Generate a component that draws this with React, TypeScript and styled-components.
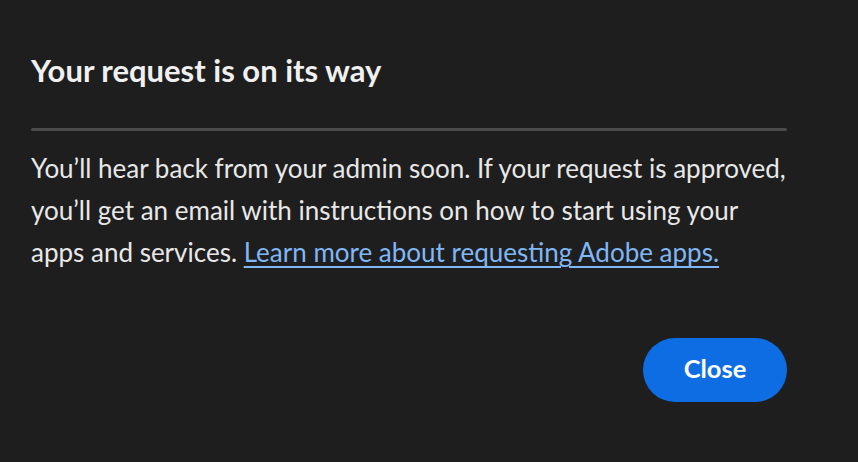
import * as React from 'react';
import styled, { createGlobalStyle } from 'styled-components';

const GlobalStyle = createGlobalStyle`
    html, body {
        margin: 0;
        padding: 0;
        background: #1e1e1e;
    }
    body {
        font-family: Lato, "Open Sans", sans-serif;
        -webkit-font-smoothing: antialiased;
    }
`;

const Dialog = styled.section`
    width: 858px;
    height: 462px;
    box-sizing: border-box;
    padding: 52px 71px 0 31px;
    background: #1e1e1e;
    display: flex;
    flex-direction: column;
`;

const Heading = styled.h2`
    margin: 0;
    font-size: 31px;
    line-height: 36px;
    font-weight: 700;
    color: #f0f0f0;
`;

const Divider = styled.hr`
    margin: 40px 0 0;
    border: none;
    height: 3px;
    border-radius: 2px;
    background: #4b4b4b;
`;

const Body = styled.p`
    margin: 16px 0 0;
    font-size: 26px;
    line-height: 42px;
    color: #e8e8e8;
`;

const HelpLink = styled.a`
    color: #80b7f5;
    text-decoration: underline;
    text-underline-offset: 4px;
    text-decoration-thickness: 1.5px;
`;

const Footer = styled.div`
    display: flex;
    justify-content: flex-end;
    margin-top: 65px;
`;

const CloseButton = styled.button`
    height: 64px;
    padding: 0 36px 5px;
    min-width: 144px;
    border: none;
    border-radius: 32px;
    background: #0e6de3;
    color: #ffffff;
    font-family: Lato, "Open Sans", sans-serif;
    font-size: 25.5px;
    font-weight: 700;
    cursor: pointer;
`;

const App = () => {
    return (
        <>
            <GlobalStyle />
            <Dialog role="dialog">
                <Heading>Your request is on its way</Heading>
                <Divider />
                <Body>
                    You’ll hear back from your admin soon. If your request is approved,
                    you’ll get an email with instructions on how to start using your
                    apps and services.{' '}
                    <HelpLink href="#">Learn more about requesting Adobe apps.</HelpLink>
                </Body>
                <Footer>
                    <CloseButton>Close</CloseButton>
                </Footer>
            </Dialog>
        </>
    );
};

export default App;
